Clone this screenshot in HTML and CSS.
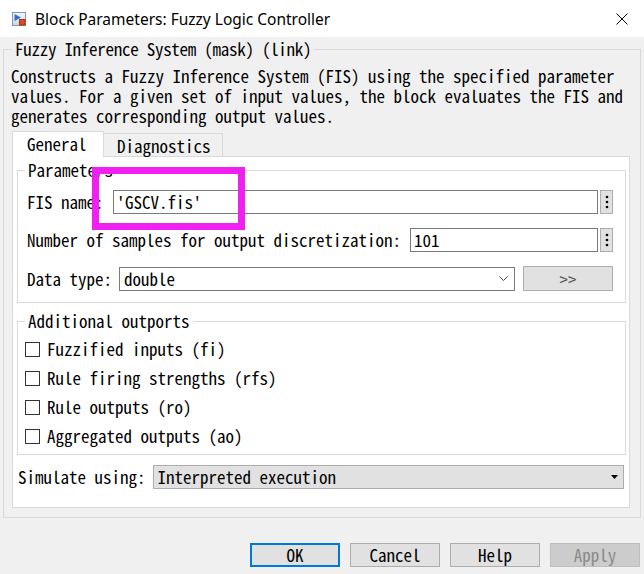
FILE: index.html
```html
<!DOCTYPE html>
<html>
<head>
<meta charset="utf-8">
<title>Block Parameters: Fuzzy Logic Controller</title>
<link rel="stylesheet" href="styles.css">
</head>
<body>
<div class="titlebar">
  <svg class="app-icon" viewBox="0 0 14 14" width="14" height="14">
    <defs>
      <linearGradient id="ig" x1="0" y1="0" x2="0" y2="1">
        <stop offset="0" stop-color="#f4f8fc"/>
        <stop offset="1" stop-color="#c9d6e4"/>
      </linearGradient>
    </defs>
    <rect x="0.5" y="0.5" width="13" height="13" fill="url(#ig)" stroke="#8796a8"/>
    <polygon points="2.5,2 9,5.5 2.5,9" fill="#2d72c8"/>
    <rect x="7.5" y="7.5" width="5.5" height="5.5" fill="#e2461c" stroke="#a8330f"/>
  </svg>
  <span class="title">Block Parameters: Fuzzy Logic Controller</span>
  <svg class="close" viewBox="0 0 12 12" width="12" height="12">
    <path d="M0.5 0.5 L11.5 11.5 M11.5 0.5 L0.5 11.5" stroke="#000" stroke-width="1" fill="none"/>
  </svg>
</div>

<fieldset class="group outer">
  <legend class="outer-legend">Fuzzy Inference System (mask) (link)</legend>
  <p class="desc">Constructs a Fuzzy Inference System (FIS) using the specified parameter values. For a given set of input values, the block evaluates the FIS and generates corresponding output values.</p>

  <div class="tabs">
    <div class="tab active">General</div>
    <div class="tab">Diagnostics</div>
  </div>

  <div class="panel">
    <fieldset class="group params">
      <legend>Parameters</legend>
      <div class="rows">
        <div class="row">
          <span class="label">FIS name:</span>
          <div class="field f1">'GSCV.fis'</div>
          <div class="dots"><svg viewBox="0 0 4 14" width="4" height="14"><circle cx="2" cy="2" r="1.3"/><circle cx="2" cy="7" r="1.3"/><circle cx="2" cy="12" r="1.3"/></svg></div>
        </div>
        <div class="row">
          <span class="label">Number of samples for output discretization:</span>
          <div class="field f2">101</div>
          <div class="dots"><svg viewBox="0 0 4 14" width="4" height="14"><circle cx="2" cy="2" r="1.3"/><circle cx="2" cy="7" r="1.3"/><circle cx="2" cy="12" r="1.3"/></svg></div>
        </div>
        <div class="row row-tall">
          <span class="label">Data type:</span>
          <div class="select"><span>double</span><svg class="chev" viewBox="0 0 9 5" width="9" height="5"><path d="M0.5 0.5 L4.5 4.5 L8.5 0.5" stroke="#444" fill="none"/></svg></div>
          <div class="more">&gt;&gt;</div>
        </div>
      </div>
    </fieldset>

    <fieldset class="group outports">
      <legend>Additional outports</legend>
      <div class="checks">
        <div class="check"><span class="box"></span><span>Fuzzified inputs (fi)</span></div>
        <div class="check"><span class="box"></span><span>Rule firing strengths (rfs)</span></div>
        <div class="check"><span class="box"></span><span>Rule outputs (ro)</span></div>
        <div class="check"><span class="box"></span><span>Aggregated outputs (ao)</span></div>
      </div>
    </fieldset>

    <div class="simrow">
      <span class="label">Simulate using:</span>
      <div class="combo"><span>Interpreted execution</span><svg viewBox="0 0 7 4" width="7" height="4"><polygon points="0,0 7,0 3.5,4" fill="#000"/></svg></div>
    </div>
  </div>
</fieldset>

<div class="buttons">
  <div class="btn default">OK</div>
  <div class="btn">Cancel</div>
  <div class="btn">Help</div>
  <div class="btn disabled">Apply</div>
</div>

<div class="annot"></div>
</body>
</html>
```

FILE: styles.css
```css
* { box-sizing: border-box; }
html, body { margin: 0; padding: 0; }
body {
  width: 644px;
  height: 574px;
  overflow: hidden;
  position: relative;
  background: #f0f0f0;
  color: #000;
  font-family: "Noto Sans Mono CJK SC", "Liberation Mono", monospace;
  font-size: 17px;
  line-height: 20px;
}

.titlebar {
  height: 37px;
  background: #fff;
  display: flex;
  align-items: center;
  padding-left: 12px;
}
.app-icon { flex: none; margin-right: 9px; }
.title {
  font-family: "Noto Sans", "Liberation Sans", sans-serif;
  font-size: 15.5px;
  line-height: 20px;
  white-space: nowrap;
}
.close { flex: none; margin-left: auto; margin-right: 16px; }

fieldset.group {
  margin: 0;
  padding: 0;
  min-width: 0;
  border: 1px solid #d9d9d9;
}
fieldset.group > legend {
  padding: 0 3px;
  line-height: 20px;
}

fieldset.outer { margin: 2px 3px 0 3px; padding-bottom: 9px; }
fieldset.outer > legend { margin-left: 8px; letter-spacing: -0.27px; }
.desc { margin: 7px 0 0 7px; }

.tabs {
  display: flex;
  align-items: flex-end;
  margin: 5px 0 0 8px;
}
.tab {
  width: 119px;
  height: 23px;
  padding: 2px 0 0 13px;
  background: #f0f0f0;
  border-top: 1px solid #d9d9d9;
  border-right: 1px solid #d9d9d9;
  white-space: nowrap;
}
.tab.active {
  width: 92px;
  height: 26px;
  padding-left: 14px;
  background: #fff;
  border-left: 1px solid #d9d9d9;
  margin-bottom: -1px;
  position: relative;
  z-index: 1;
}

.panel {
  background: #fff;
  border: 1px solid #d9d9d9;
  margin: 0 10px 0 8px;
  padding-bottom: 18px;
}

fieldset.params { margin: 3px 3px 0 4px; }
fieldset.params > legend, fieldset.outports > legend { margin-left: 7px; }
.rows {
  display: flex;
  flex-direction: column;
  gap: 14px;
  padding: 10px 12px 11px 9px;
}
.row { display: flex; align-items: center; height: 24px; }
.row-tall { height: 25px; }
.label { white-space: nowrap; }
.field {
  flex: 1;
  height: 24px;
  margin-left: 9px;
  padding: 0 3px;
  border: 1px solid #7a7a7a;
  background: #fff;
  line-height: 22px;
  white-space: nowrap;
}
.dots {
  flex: none;
  width: 13px;
  height: 24px;
  margin-left: 2px;
  border: 1px solid #adadad;
  background: #e1e1e1;
  display: flex;
  align-items: center;
  justify-content: center;
}
.dots svg { fill: #000; }
.select {
  flex: 1;
  height: 24px;
  margin-left: 7px;
  padding: 0 6px 0 4px;
  border: 1px solid #7a7a7a;
  background: #fff;
  display: flex;
  align-items: center;
  justify-content: space-between;
}
.more {
  flex: none;
  width: 90px;
  height: 25px;
  margin-left: 8px;
  border: 1px solid #adadad;
  background: #e1e1e1;
  color: #555;
  text-align: center;
  line-height: 23px;
}

fieldset.outports { margin: 8px 3px 0 4px; }
.checks {
  display: flex;
  flex-direction: column;
  gap: 9px;
  padding: 8px 0 8px 7px;
}
.check { display: flex; align-items: center; height: 20px; }
.box {
  flex: none;
  width: 15px;
  height: 15px;
  border: 1px solid #333;
  background: #fff;
  margin-right: 7px;
}

.simrow {
  display: flex;
  align-items: center;
  gap: 7px;
  height: 24px;
  margin: 10px 5px 0 5px;
}
.combo {
  flex: 1;
  height: 24px;
  padding: 0 5px 0 4px;
  border: 1px solid #adadad;
  background: #e1e1e1;
  display: flex;
  align-items: center;
  justify-content: space-between;
}

.buttons {
  display: flex;
  justify-content: flex-end;
  gap: 10px;
  margin-top: 25px;
  padding-right: 4px;
}
.btn {
  width: 90px;
  height: 24px;
  border: 1px solid #adadad;
  background: #e1e1e1;
  text-align: center;
  line-height: 22px;
}
.btn.default { border: 2px solid #0078d7; line-height: 20px; }
.btn.disabled { background: #cccccc; border-color: #bfbfbf; color: #8a8a8a; }

.annot {
  position: absolute;
  left: 92px;
  top: 167px;
  width: 153px;
  height: 63px;
  border: 7px solid #f020f0;
}
```
